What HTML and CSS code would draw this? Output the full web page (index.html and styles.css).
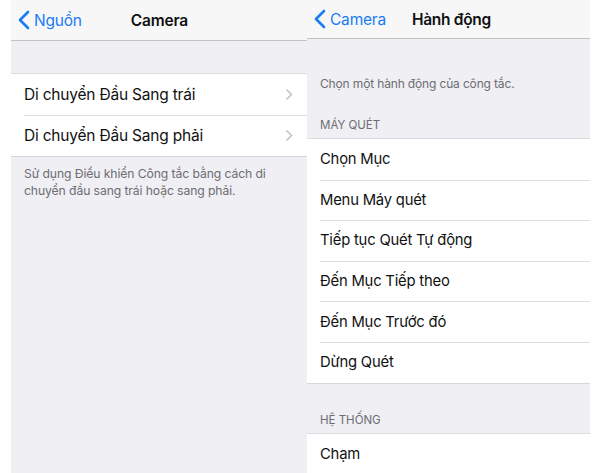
FILE: index.html
```html
<!DOCTYPE html>
<html lang="vi">
<head>
<meta charset="utf-8">
<title>Camera - Hành động</title>
<link rel="stylesheet" href="styles.css">
</head>
<body>
<div class="screen">
  <div class="gutter-left"></div>
  <section class="panel panel-left">
    <header class="nav nav-left">
      <a class="back">
        <svg class="back-chev" width="12" height="20" viewBox="0 0 12 20"><path d="M10 2 L2 10 L10 18" fill="none" stroke="#1a7cf3" stroke-width="2.6" stroke-linecap="round" stroke-linejoin="round"/></svg>
        <span>Nguồn</span>
      </a>
      <h1 class="title title-left">Camera</h1>
    </header>
    <ul class="group group-left">
      <li class="row row-left"><span>Di chuyển Đầu Sang trái</span><svg class="chev" width="8" height="13" viewBox="0 0 8 13"><path d="M1.5 1.5 L6.5 6.5 L1.5 11.5" fill="none" stroke="#c4c4c9" stroke-width="1.6"/></svg></li>
      <li class="row row-left"><span>Di chuyển Đầu Sang phải</span><svg class="chev" width="8" height="13" viewBox="0 0 8 13"><path d="M1.5 1.5 L6.5 6.5 L1.5 11.5" fill="none" stroke="#c4c4c9" stroke-width="1.6"/></svg></li>
    </ul>
    <p class="footer">Sử dụng Điều khiển Công tắc bằng cách di chuyển đầu sang trái hoặc sang phải.</p>
  </section>
  <section class="panel panel-right">
    <header class="nav nav-right">
      <a class="back">
        <svg class="back-chev" width="12" height="20" viewBox="0 0 12 20"><path d="M10 2 L2 10 L10 18" fill="none" stroke="#1a7cf3" stroke-width="2.6" stroke-linecap="round" stroke-linejoin="round"/></svg>
        <span>Camera</span>
      </a>
      <h1 class="title title-right">Hành động</h1>
    </header>
    <p class="desc">Chọn một hành động của công tắc.</p>
    <h2 class="section">MÁY QUÉT</h2>
    <ul class="group group-right">
      <li class="row row-right">Chọn Mục</li>
      <li class="row row-right">Menu Máy quét</li>
      <li class="row row-right">Tiếp tục Quét Tự động</li>
      <li class="row row-right">Đến Mục Tiếp theo</li>
      <li class="row row-right">Đến Mục Trước đó</li>
      <li class="row row-right">Dừng Quét</li>
    </ul>
    <h2 class="section section-2">HỆ THỐNG</h2>
    <ul class="group group-right">
      <li class="row row-right">Chạm</li>
      <li class="row row-right"></li>
    </ul>
  </section>
  <div class="gutter-right"></div>
</div>
</body>
</html>
```
FILE: styles.css
```css
* { box-sizing: border-box; }
html, body { margin: 0; padding: 0; background: #ffffff; }
body {
  font-family: Inter, "Noto Sans", "Liberation Sans", sans-serif;
  color: #111;
  width: 600px;
  height: 473px;
  overflow: hidden;
}
.screen { display: flex; height: 473px; }
.gutter-left { width: 11px; flex: none; }
.gutter-right { flex: 1; }
.panel {
  background: #efeff4;
  height: 473px;
  overflow: hidden;
  flex: none;
}
.panel-left { width: 296px; }
.panel-right { width: 283px; }

.nav {
  display: flex;
  align-items: center;
  background: #f7f7f8;
  border-bottom: 1px solid #c2c2c6;
}
.nav-left { height: 41px; padding-left: 7px; }
.nav-right { height: 39px; padding-left: 7px; }
.back {
  display: flex;
  align-items: center;
  color: #1a7cf3;
  font-size: 15.5px;
  letter-spacing: -0.2px;
}
.back-chev { margin-right: 4px; }
.title {
  margin: 0;
  font-size: 15.5px;
  font-weight: 600;
  letter-spacing: -0.2px;
  color: #111;
}
.title-left { margin-left: 49px; }
.title-right { margin-left: 26px; letter-spacing: -0.3px; }

.group {
  list-style: none;
  margin: 0;
  padding: 0;
  background: #fff;
  border-top: 1px solid #dcdce0;
  border-bottom: 1px solid #d6d6da;
}
.group-left { margin-top: 32px; }
.row {
  position: relative;
  display: flex;
  align-items: center;
  justify-content: space-between;
}
.row + .row::before {
  content: "";
  position: absolute;
  top: 0;
  left: 13px;
  right: 0;
  border-top: 1px solid #dedee2;
}
.row-left {
  height: 41px;
  padding: 0 14px 0 13px;
  font-size: 15.5px;
  letter-spacing: -0.2px;
}
.chev { flex: none; }
.footer {
  margin: 0;
  padding: 8px 13px;
  font-size: 12.2px;
  line-height: 17px;
  color: #6d6d72;
  letter-spacing: -0.1px;
}

.desc {
  margin: 0;
  padding: 37px 13px 0;
  font-size: 12px;
  line-height: 16px;
  color: #6d6d72;
  letter-spacing: -0.15px;
}
.section {
  margin: 0;
  padding: 25px 13px 5px;
  font-size: 11.5px;
  line-height: 16px;
  font-weight: 400;
  color: #6d6d72;
}
.section-2 { padding-top: 28px; }
.row-right {
  height: 40.6px;
  padding: 0 13px;
  font-size: 14.8px;
  letter-spacing: -0.2px;
}
```
